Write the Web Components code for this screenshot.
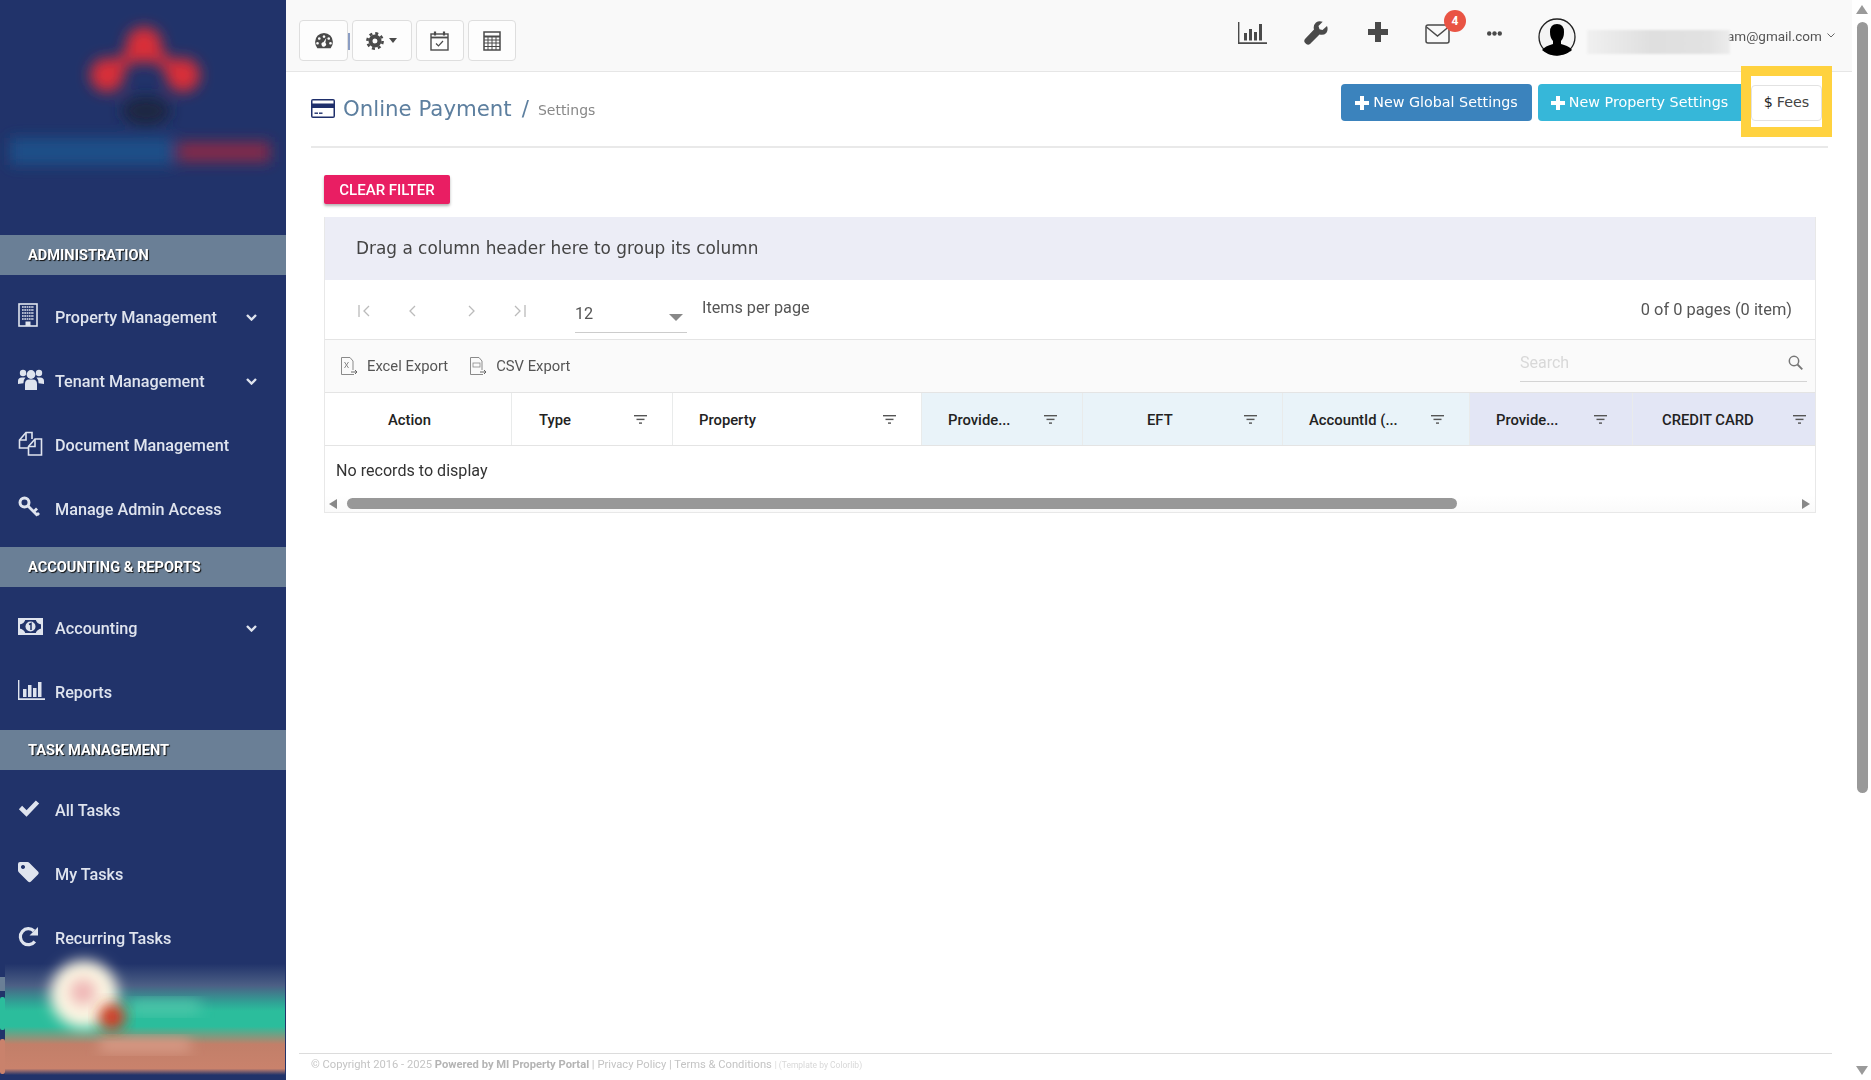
<!DOCTYPE html>
<html lang="en">
<head>
<meta charset="utf-8">
<title>Online Payment</title>
<style>
  html, body { margin: 0; height: 100%; background: #fff; overflow: hidden; }
  body { font-family: Roboto, "Liberation Sans", sans-serif; }
</style>
</head>
<body>
<app-shell>
  <app-sidebar slot="side">
    <side-section>ADMINISTRATION</side-section>
    <side-item icon="building" chev>Property Management</side-item>
    <side-item icon="users" chev>Tenant Management</side-item>
    <side-item icon="files">Document Management</side-item>
    <side-item icon="key">Manage Admin Access</side-item>
    <side-section style="margin-top:6px;margin-bottom:9px">ACCOUNTING &amp; REPORTS</side-section>
    <side-item icon="money" chev>Accounting</side-item>
    <side-item icon="bars">Reports</side-item>
    <side-section style="margin-top:6px;margin-bottom:8px">TASK MANAGEMENT</side-section>
    <side-item icon="check">All Tasks</side-item>
    <side-item icon="tag">My Tasks</side-item>
    <side-item icon="repeat">Recurring Tasks</side-item>
  </app-sidebar>
  <top-bar slot="top"></top-bar>
  <page-head slot="main"></page-head>
  <clear-button slot="main">CLEAR FILTER</clear-button>
  <data-grid slot="main"></data-grid>
  <app-footer slot="foot"></app-footer>
</app-shell>

<script>
const light = '#dfe4ee'
const dark = '#4a4a4a'

const icons = {
  building: `<svg width="20" height="24" viewBox="0 0 20 24"><rect x="1" y="1" width="18" height="22" fill="none" stroke="${light}" stroke-width="1.6"/>
    <path d="M4 4h12M4 7h12M4 10h12M4 13h12M4 16h12" stroke="${light}" stroke-width="1.6" stroke-dasharray="1.7 .6"/><rect x="7.5" y="18.5" width="5" height="4.5" fill="${light}"/></svg>`,
  users: `<svg width="26" height="24" viewBox="0 0 26 24" fill="${light}"><circle cx="5" cy="6" r="3.2"/><circle cx="21" cy="6" r="3.2"/><circle cx="13" cy="7.5" r="4.4"/>
    <path d="M0 17v-3q0-3.6 4-3.6h3.5Q5 13 5.4 16.2zM26 17v-3q0-3.6-4-3.6h-3.5q2.500 2.600 2.100 5.800zM7 23v-6q0-4.500 4-4.500h4q4 0 4 4.500v6z"/></svg>`,
  files: `<svg width="25" height="25" viewBox="0 0 25 25" fill="none" stroke="${light}" stroke-width="1.6"><path d="M10 17H1.500V9L8 1.500h6v6.500"/><path d="M1.500 9H8V2"/><path d="M10.500 15.500L17 8h6.500v16H10.500z"/><path d="M10.500 15.500H17V8"/></svg>`,
  key: `<svg width="22" height="22" viewBox="0 0 22 22" fill="none" stroke="${light}"><circle cx="6.500" cy="6.500" r="4.500" stroke-width="3"/><path d="M10 10l9.500 9.500M16 15.500l3-3M19 19l2-2" stroke-width="2.800"/></svg>`,
  money: `<svg width="25" height="17" viewBox="0 0 25 17"><rect width="25" height="17" fill="${light}"/><rect x="2" y="2" width="21" height="13" fill="#21336a"/><path d="M1 1h6.500Q6.500 6 1 6.500zM24 1h-6.500Q18.500 6 24 6.500zM1 16h6.500Q6.500 11 1 10.500zM24 16h-6.500Q18.500 11 24 10.500z" fill="${light}"/><circle cx="12.500" cy="8.500" r="5" fill="${light}"/><path d="M11 6.500l2-1v6.500" fill="none" stroke="#21336a" stroke-width="1.500"/></svg>`,
  bars: `<svg width="27" height="20" viewBox="0 0 27 20" fill="${light}"><path d="M0 0h1.400v18.300H27V20H0z"/><rect x="5" y="9" width="3.500" height="8"/><rect x="10" y="5" width="3.500" height="12"/><rect x="15" y="8" width="3.500" height="9"/><rect x="20" y="2" width="3.500" height="15"/></svg>`,
  check: `<svg width="22" height="18" viewBox="0 0 22 18" fill="none" stroke="${light}" stroke-width="4.600"><path d="M2.500 8.500l6 6L19.500 3"/></svg>`,
  tag: `<svg width="21" height="21" viewBox="0 0 21 21"><path fill="${light}" fill-rule="evenodd" d="M2 0h7.500q1 0 2 1L20 9.500q1.400 1.500 0 3L13 19.500q-1.500 1.500-3 0L1 10.500Q0 9.500 0 8.500V2Q0 0 2 0zM5 3a2 2 0 1 0 .01 0z"/></svg>`,
  repeat: `<svg width="21" height="21" viewBox="0 0 21 21" fill="none"><path d="M16.800 15.500A8 8 0 1 1 16 5" stroke="${light}" stroke-width="3.200"/><path d="M20 1v8.500h-8.500z" fill="${light}"/></svg>`,
  gauge: `<svg width="18" height="16" viewBox="0 0 20 18"><path fill="${dark}" fill-rule="evenodd" d="M10 0a10 10 0 0 1 10 10q0 4-2.500 7.200H2.500Q0 14 0 10A10 10 0 0 1 10 0zM10 2.500a1.500 1.500 0 1 0 .01 0zM4.700 4.700a1.500 1.500 0 1 0 .01 0zM15.300 4.700a1.500 1.500 0 1 0 .01 0zM2.700 10a1.500 1.500 0 1 0 .01 0zM17.300 10a1.500 1.500 0 1 0 .01 0zM12.600 5.500L9.300 10.300a2.500 2.500 0 1 0 2.200.7z"/></svg>`,
  gear: `<svg width="18" height="18" viewBox="0 0 18 18"><circle cx="9" cy="9" r="7.600" fill="none" stroke="${dark}" stroke-width="2.600" stroke-dasharray="3 2.970"/><path fill="${dark}" fill-rule="evenodd" d="M9 2.500a6.500 6.500 0 1 1 0 13 6.500 6.500 0 0 1 0-13zM9 6.500a2.500 2.500 0 1 0 0 5 2.500 2.500 0 0 0 0-5z"/></svg>`,
  calendar: `<svg width="19" height="20" viewBox="0 0 19 20" fill="none" stroke="${dark}"><rect x="1" y="3" width="17" height="16" stroke-width="1.400"/><path d="M1 6.500h17" stroke-width="1.800"/><path d="M5 .5v4M14 .5v4" stroke-width="2.200"/><path d="M6 12.500l2.500 2.500 4.500-5" stroke-width="1.200"/></svg>`,
  calc: `<svg width="18" height="20" viewBox="0 0 18 20" fill="none" stroke="${dark}"><rect x="1" y="1" width="16" height="18" stroke-width="1.500"/><path d="M1 5.500h16" stroke-width="2"/><path d="M1 9h16M1 12h16M1 15.500h16M5 6v13M9 6v13M13 6v13" stroke-width="1"/></svg>`,
  chart: `<svg width="29" height="22" viewBox="0 0 29 22" fill="${dark}"><path d="M0 0h1.400v20.300H29V22H0z"/><rect x="6" y="11" width="3" height="7.500"/><rect x="11" y="7" width="3" height="11.500"/><rect x="16" y="10" width="3" height="8.500"/><rect x="21" y="2" width="3" height="16.500"/></svg>`,
  wrench: `<svg width="24" height="24" viewBox="0 0 24 24"><path fill="${dark}" d="M23 5l-4.500 4-3-.8L14.500 5 18.700.800Q15-.8 12 1.500 8.800 4.500 10 8.500L1 18q-1.500 2 0 3.800l1.200 1.200q2 1.500 3.800 0l9.500-9.500q4 1.200 6.800-1.500Q24.500 9 23 5z"/></svg>`,
  plus: `<svg width="20" height="20" viewBox="0 0 20 20" fill="${dark}"><path d="M7 0h6v7h7v6h-7v7H7v-7H0V7h7z"/></svg>`,
  mail: `<svg width="25" height="20" viewBox="0 0 25 20" fill="none" stroke="${dark}" stroke-width="1.500"><rect x="1" y="1" width="23" height="18" rx="2"/><path d="M1.500 3l11 9 11-9"/></svg>`,
  avatar: `<svg width="38" height="38" viewBox="0 0 38 38"><circle cx="19" cy="19" r="18" fill="#f4f4f4" stroke="#222" stroke-width="1.300"/><path d="M19 6q7 0 7 8 0 6-3 9v3q8 2 11 6-6 5.500-15 5.500T4 32q3-4 11-6v-3q-3-3-3-9 0-8 7-8z" fill="#000"/></svg>`,
  filter: `<svg width="13" height="9" viewBox="0 0 13 9" fill="#555"><rect width="13" height="1.400"/><rect x="2.500" y="3.700" width="8" height="1.400"/><rect x="5" y="7.400" width="3" height="1.400"/></svg>`,
  xls: `<svg width="17" height="18" viewBox="0 0 17 18" fill="none" stroke="#8a8a8a"><path d="M12 13v-9L9 .5H.5v17H13"/><path d="M3.500 5l4 6M7.500 5l-4 6" stroke-width="1"/><path d="M10 15h6M14 13l2 2-2 2" stroke="#666"/></svg>`,
  csv: `<svg width="17" height="18" viewBox="0 0 17 18" fill="none" stroke="#8a8a8a"><path d="M12 13v-9L9 .5H.5v17H13"/><rect x="3" y="6" width="7" height="4" stroke-width=".8"/><path d="M10 15h6M14 13l2 2-2 2" stroke="#666"/></svg>`,
  search: `<svg width="15" height="15" viewBox="0 0 15 15" fill="none" stroke="#777" stroke-width="1.500"><circle cx="6" cy="6" r="4.700"/><path d="M9.500 9.500l4.800 4.800" stroke-width="1.800"/></svg>`,
}

// small helper, every element is just css + markup in an open shadow root
function makeEl(name, css, html, setup) {
  class El extends HTMLElement {
    constructor() {
      super()
      this.attachShadow({ mode: 'open' })
      const t = document.createElement('template')
      t.innerHTML = `<style>${css}</style>${typeof html === 'function' ? html(this) : html}`
      this.shadowRoot.appendChild(t.content.cloneNode(true))
    }
    connectedCallback() {
      if (setup) setup(this)
    }
  }
  customElements.define(name, El)
}

makeEl('app-shell', `
  :host { display: flex; width: 1871px; height: 1080px; overflow: hidden; filter: blur(.35px); }
  .right { flex: 1; display: flex; flex-direction: column; min-width: 0; }
  .content { flex: 1; display: flex; flex-direction: column; padding-left: 13px; }
  .lane { width: 19px; flex: none; display: flex; flex-direction: column; align-items: center; padding-left: 1px; box-sizing: border-box; }
  .up { margin-top: 5px; border: solid transparent; border-width: 0 6px 9px; border-bottom-color: #9a9a9a; }
  .thumb { margin-top: 8px; width: 11px; height: 771px; border-radius: 6px; background: #999; }
  .down { margin-top: auto; margin-bottom: 5px; border: solid transparent; border-width: 9px 6px 0; border-top-color: #9a9a9a; }
`, `
  <slot name="side"></slot>
  <div class="right">
    <slot name="top"></slot>
    <div class="content"><slot name="main"></slot></div>
    <slot name="foot"></slot>
  </div>
  <div class="lane"><div class="up"></div><div class="thumb"></div><div class="down"></div></div>
`)

makeEl('app-sidebar', `
  :host { display: block; width: 286px; flex: none; height: 1080px; background: #21336a; position: relative; overflow: hidden; }
  svg.logo { display: block; }
  svg.over { position: absolute; left: 0; top: 947px; }
`, `
  <svg class="logo" width="286" height="235" viewBox="0 0 286 235">
    <defs><filter id="b" x="-30%" y="-60%" width="160%" height="220%"><feGaussianBlur stdDeviation="7"/></filter></defs>
    <g filter="url(#b)">
      <path d="M107 75L144 45L181 75" fill="none" stroke="#c92f3d" stroke-width="14"/>
      <circle cx="144" cy="45" r="18" fill="#d92f39"/>
      <circle cx="107" cy="75" r="17" fill="#d92f39"/>
      <circle cx="183" cy="75" r="17" fill="#d92f39"/>
      <ellipse cx="146" cy="111" rx="24" ry="15" fill="#1b2542"/>
      <rect x="10" y="138" width="162" height="27" fill="#1b5088"/>
      <rect x="178" y="142" width="92" height="20" fill="#85294a"/>
    </g>
  </svg>
  <slot></slot>
  <svg class="over" width="286" height="133" viewBox="0 0 286 133">
    <defs>
      <linearGradient id="g" x1="0" y1="0" x2="0" y2="1">
        <stop offset="0" stop-color="#21336a"/><stop offset=".13" stop-color="#21336a"/>
        <stop offset=".3" stop-color="#4c5f85"/><stop offset=".44" stop-color="#2fa596"/>
        <stop offset=".5" stop-color="#2bbd9c"/><stop offset=".62" stop-color="#2bbd9c"/>
        <stop offset=".76" stop-color="#c27f69"/><stop offset=".95" stop-color="#c9826c"/>
        <stop offset="1" stop-color="#21336a"/>
      </linearGradient>
      <filter id="s" x="-40%" y="-40%" width="180%" height="180%"><feGaussianBlur stdDeviation="7"/></filter>
      <clipPath id="c"><rect x="5" y="0" width="280" height="128"/></clipPath>
    </defs>
    <rect x="0" y="30" width="5" height="14" fill="#6a7f96"/>
    <rect x="0" y="50" width="5" height="33" rx="2" fill="#2bbd9c"/>
    <rect x="0" y="92" width="5" height="35" rx="2" fill="#c9826c"/>
    <g clip-path="url(#c)">
      <rect x="5" y="0" width="280" height="128" fill="url(#g)"/>
      <rect x="130" y="54" width="70" height="12" fill="#52c9ac" filter="url(#s)"/>
      <rect x="100" y="92" width="90" height="12" fill="#dba08c" filter="url(#s)"/>
      <circle cx="84" cy="47" r="34" fill="#fbf5e2" filter="url(#s)"/>
      <circle cx="83" cy="45" r="13" fill="#efb5b5" filter="url(#s)"/>
      <circle cx="112" cy="70" r="13" fill="#d8351f" filter="url(#s)"/>
    </g>
  </svg>
`)

makeEl('side-section', `
  :host { display: flex; align-items: center; height: 40px; margin-bottom: 10px; padding-left: 28px; background: #6a7f96;
    font: 700 14.600px Roboto, sans-serif; color: #fff; text-shadow: 1px 1px 1px #111; }
`, `<slot></slot>`)

makeEl('side-item', `
  :host { display: flex; align-items: center; height: 64px; font: 500 16.200px Roboto, sans-serif; color: #dfe4ee; position: relative; }
  .ic { width: 37px; margin-left: 18px; display: flex; margin-top: -4px; flex: none; }
  .txt { flex: 1; margin-top: 1px; }
  .ch { margin-right: 29px; display: flex; }
`, (el) => `
  <span class="ic">${icons[el.getAttribute('icon')]}</span>
  <span class="txt"><slot></slot></span>
  ${el.hasAttribute('chev') ? `<span class="ch"><svg width="11" height="7" viewBox="0 0 11 7" fill="none" stroke="#dfe4ee" stroke-width="2.400"><path d="M1 1l4.500 4.500L10 1"/></svg></span>` : ''}
`)

makeEl('tool-btn', `
  :host { display: flex; align-items: center; justify-content: center; height: 41px; box-sizing: border-box; background: #fdfdfd;
    border: 1px solid #dedede; border-radius: 4px; gap: 5px; }
  .caret { border: solid transparent; border-width: 5px 4.500px 0; border-top-color: ${dark}; }
`, (el) => `${icons[el.getAttribute('icon')]}${el.hasAttribute('caret') ? '<span class="caret"></span>' : ''}`)

makeEl('top-bar', `
  :host { display: flex; align-items: flex-start; height: 72px; box-sizing: border-box; background: #f9f9f9; border-bottom: 1px solid #e6e6e6; padding: 20px 0 0 13px; }
  .sep { width: 1.500px; height: 17px; margin: 13px 2px 0 0; background: #8b9dc3; }
  .gap { width: 4px; }
  .left { display: flex; }
  .right { margin-left: auto; display: flex; align-items: flex-start; height: 50px; margin-top: -20px; width: 614px; position: relative; }
  .right > span { display: flex; }
  .badge { position: absolute; left: 206px; top: 10px; width: 22px; height: 22px; border-radius: 50%; background: #e95444; color: #fff;
    font: 700 12px/22px Roboto, sans-serif; justify-content: center; }
  .blur { width: 143px; height: 24px; margin: 30px 0 0 12px; background: linear-gradient(90deg, #f0f0f0, #dfdfdf 45%, #e2e2e2 85%, #ececec); filter: blur(1px); }
  .mail { font: 400 13.500px Roboto, sans-serif; color: #555; margin: 28px 0 0 -3px; }
  .chev { margin: 33px 0 0 5px; }
`, `
  <div class="left">
    <tool-btn icon="gauge" style="width:49px"></tool-btn><span class="sep"></span>
    <tool-btn icon="gear" caret style="width:60px"></tool-btn><span class="gap"></span>
    <tool-btn icon="calendar" style="width:48px"></tool-btn><span class="gap"></span>
    <tool-btn icon="calc" style="width:48px"></tool-btn>
  </div>
  <div class="right">
    <span style="margin:22px 0 0 0">${icons.chart}</span>
    <span style="margin:21px 0 0 37px">${icons.wrench}</span>
    <span style="margin:22px 0 0 40px">${icons.plus}</span>
    <span style="margin:24px 0 0 37px">${icons.mail}</span>
    <span class="badge">4</span>
    <span style="margin:31px 0 0 37px"><svg width="15" height="5" viewBox="0 0 15 5" fill="${dark}"><circle cx="2.200" cy="2.500" r="2.200"/><circle cx="7.500" cy="2.500" r="2.200"/><circle cx="12.800" cy="2.500" r="2.200"/></svg></span>
    <span style="margin:18px 0 0 36px">${icons.avatar}</span>
    <span class="blur" style="margin-left:11px"></span>
    <span class="mail">am@gmail.com</span>
    <span class="chev"><svg width="8" height="5" viewBox="0 0 8 5" fill="none" stroke="#666" stroke-width="1"><path d="M.5 .5L4 4 7.500 .5"/></svg></span>
  </div>
`)

makeEl('head-btn', `
  :host { display: flex; align-items: center; justify-content: center; gap: 4px; height: 37px; box-sizing: border-box; border-radius: 4px; padding-bottom: 2px;
    font: 400 14.300px "DejaVu Sans", sans-serif; color: #fff; background: var(--bg); white-space: nowrap; }
  svg { display: block; margin-top: 2px; }
`, `<svg width="14" height="14" viewBox="0 0 14 14" fill="#fff"><path d="M5 0h4v5h5v4H9v5H5V9H0V5h5z"/></svg><slot></slot>`)

makeEl('fees-btn', `
  :host { display: flex; align-items: center; justify-content: center; position: relative; width: 71px; height: 36px; box-sizing: border-box; margin-top: 1px; padding-bottom: 2px;
    background: #fff; border: 1px solid #e2e2e2; border-radius: 4px; font: 400 14.300px "DejaVu Sans", sans-serif; color: #444; white-space: nowrap; }
  b { font-weight: 400; color: #222; margin-right: 4px; }
  .mark { position: absolute; left: -11px; top: -20px; width: 91px; height: 71px; box-sizing: border-box; border: solid #ffd23f; border-width: 10px; pointer-events: none; }
`, `<b>$</b><slot></slot><span class="mark"></span>`)

makeEl('page-head', `
  :host { display: flex; align-items: flex-start; height: 76px; box-sizing: border-box; margin: 0 24px 0 12px; border-bottom: 2px solid #e9e9e9; }
  .title { display: flex; align-items: center; height: 74px; margin-top: -1px; color: #5d7f9f; font: 400 21.300px "DejaVu Sans", sans-serif; white-space: nowrap; }
  .title svg { margin-right: 8px; }
  .slash { margin: 0 9px 0 10px; color: #5d7f9f; }
  .sub { font-size: 14px; color: #888; margin-top: 4px; }
  .btns { margin-left: auto; display: flex; margin-top: 12px; margin-right: 6px; }
`, `
  <div class="title">
    <svg width="24" height="19" viewBox="0 0 24 19"><rect width="24" height="19" rx="2" fill="#1f2f6b"/><rect x="1.500" y="1.500" width="21" height="3" fill="#fff"/><rect x="1.500" y="9" width="21" height="8.500" fill="#fff"/><rect x="3.500" y="13.500" width="3.500" height="1.400" fill="#1f2f6b"/><rect x="8" y="13.500" width="3.500" height="1.400" fill="#1f2f6b"/></svg>
    Online Payment<span class="slash">/</span><span class="sub">Settings</span>
  </div>
  <div class="btns">
    <head-btn style="--bg:#3b83bd;width:191px;margin-right:6px">New Global Settings</head-btn>
    <head-btn style="--bg:#36b7d9;width:203px;margin-right:10px;border-radius:4px 0 0 4px">New Property Settings</head-btn>
    <fees-btn>Fees</fees-btn>
  </div>
`)

makeEl('clear-button', `
  :host { display: flex; align-items: center; justify-content: center; align-self: flex-start; width: 126px; height: 29px; margin: 27px 0 13px 25px;
    background: #e91e63; color: #fff; border-radius: 2px; font: 500 15px Roboto, sans-serif; box-shadow: 0 2px 3px rgba(0,0,0,.3); }
`, `<slot></slot>`)

makeEl('grid-cell', `
  :host { display: flex; align-items: center; box-sizing: border-box; height: 52px; padding-left: var(--pl, 26px); padding-right: var(--pr, 25px); background: var(--bg, #fff);
    border-right: 1px solid #e9ebeb; font: 500 14.800px Roboto, sans-serif; color: #222; white-space: nowrap; }
  :host(:last-child) { border-right: 0; }
  .t { flex: 1; padding-top: 1px; }
  svg { display: block; }
`, (el) => `<span class="t"><slot></slot></span>${el.hasAttribute('nofilter') ? '' : icons.filter}`)

makeEl('data-grid', `
  :host { display: block; width: 1492px; margin-left: 25px; box-sizing: border-box; border: 1px solid #e8e8e8; border-top: 0; font-family: Roboto, sans-serif; }
  .group { display: flex; align-items: center; height: 63px; box-sizing: border-box; padding: 0 0 2px 31px; background: #ecedf6; font: 400 16.900px "DejaVu Sans", sans-serif; color: #444; }
  .pager { display: flex; align-items: flex-start; height: 60px; box-sizing: border-box; border-bottom: 1px solid #e4e4e4; color: #555; font-size: 16.200px; position: relative; }
  .nav { display: flex; margin-top: 25px; }
  .nav svg { display: block; }
  .sel { width: 112px; height: 53px; box-sizing: border-box; border-bottom: 1px solid #ccc; margin-left: 49px; display: flex; align-items: flex-end; padding-bottom: 9px; justify-content: space-between; color: #555; }
  .caret { border: solid transparent; border-width: 7px 7px 0; border-top-color: #888; margin: 0 4px 2px 0; }
  .ipp { margin: 18px 0 0 15px; }
  .count { margin: 20px 23px 0 auto; font-size: 16.400px; }
  .tools { display: flex; align-items: flex-start; height: 53px; box-sizing: border-box; background: #fafafa; border-bottom: 1px solid #e4e4e4; font-size: 14.800px; color: #555; }
  .tools .ex { display: flex; align-items: center; gap: 9px; margin-top: 17px; }
  .search { margin-left: auto; margin-right: 8px; margin-top: 7px; width: 287px; height: 35px; box-sizing: border-box; border-bottom: 1px solid #d4d4d4; display: flex; align-items: center; justify-content: space-between; color: #d8d8d8; font-size: 16px; padding-right: 4px; padding-bottom: 3px; }
  .head { display: grid; grid-template-columns: 187px 161px 249px 161px 200px 187px 163px 1fr; border-bottom: 1px solid #e4e4e4; }
  .empty { height: 49px; box-sizing: border-box; padding: 15px 0 0 11px; font-size: 16.100px; color: #333; }
  .bar { display: flex; align-items: center; height: 17px; background: linear-gradient(#fff, #fafafa); }
  .tri-l { border: solid transparent; border-width: 5.500px 8px 5.500px 0; border-right-color: #888; margin-left: 4px; }
  .thumb { width: 1110px; height: 11px; margin-left: 10px; border-radius: 6px; background: #989898; }
  .tri-r { border: solid transparent; border-width: 5.500px 0 5.500px 8px; border-left-color: #888; margin-left: auto; margin-right: 5px; }
`, `
  <div class="group">Drag a column header here to group its column</div>
  <div class="pager">
    <div class="nav">
      <svg style="margin-left:33px" width="13" height="12" viewBox="0 0 13 12" fill="none" stroke="#bbb" stroke-width="1.300"><path d="M1 0v12M11 1L6 6l5 5"/></svg>
      <svg style="margin-left:37px" width="9" height="12" viewBox="0 0 9 12" fill="none" stroke="#bbb" stroke-width="1.300"><path d="M7 1L2 6l5 5"/></svg>
      <svg style="margin-left:50px" width="9" height="12" viewBox="0 0 9 12" fill="none" stroke="#bbb" stroke-width="1.300"><path d="M2 1l5 5-5 5"/></svg>
      <svg style="margin-left:37px" width="13" height="12" viewBox="0 0 13 12" fill="none" stroke="#bbb" stroke-width="1.300"><path d="M2 1l5 5-5 5M12 0v12"/></svg>
    </div>
    <div class="sel"><span>12</span><span class="caret"></span></div>
    <span class="ipp">Items per page</span>
    <span class="count">0 of 0 pages (0 item)</span>
  </div>
  <div class="tools">
    <span class="ex" style="margin-left:16px">${icons.xls}Excel Export</span>
    <span class="ex" style="margin-left:22px">${icons.csv}CSV Export</span>
    <div class="search"><span>Search</span>${icons.search}</div>
  </div>
  <div class="head">
    <grid-cell nofilter style="--pl:63px">Action</grid-cell>
    <grid-cell>Type</grid-cell>
    <grid-cell>Property</grid-cell>
    <grid-cell>Provide...</grid-cell>
    <grid-cell>EFT</grid-cell>
    <grid-cell>AccountId (...</grid-cell>
    <grid-cell>Provide...</grid-cell>
    <grid-cell>CREDIT CARD</grid-cell>
  </div>
  <div class="empty">No records to display</div>
  <div class="bar"><span class="tri-l"></span><span class="thumb"></span><span class="tri-r"></span></div>
`, (el) => {
  // header colours and the two odd paddings, set by column index
  const cells = el.shadowRoot.querySelectorAll('grid-cell')
  const tint = { 3: '#e9f3f9', 4: '#e9f3f9', 5: '#e9f3f9', 6: '#e3e6f5', 7: '#e3e6f5' }
  cells.forEach((c, i) => { if (tint[i]) c.style.setProperty('--bg', tint[i]) })
  cells[1].style.setProperty('--pl', '27px')
  cells[4].style.setProperty('--pl', '64px')
  cells[7].style.setProperty('--pl', '29px')
  cells[7].style.setProperty('--pr', '9px')
})

makeEl('app-footer', `
  :host { display: block; margin: 0 20px 0 13px; height: 27px; box-sizing: border-box; border-top: 1px solid #dcdcdc; padding: 4px 0 0 12px; font: 400 11.200px Roboto, sans-serif; color: #c4c4c4; white-space: nowrap; }
  b { color: #b4b4b4; }
  small { font-size: 8.500px; color: #d8d8d8; }
`, `© Copyright 2016 - 2025 <b>Powered by MI Property Portal</b> | Privacy Policy | Terms &amp; Conditions <small>| (Template by Colorlib)</small>`)
</script>
</body>
</html>
